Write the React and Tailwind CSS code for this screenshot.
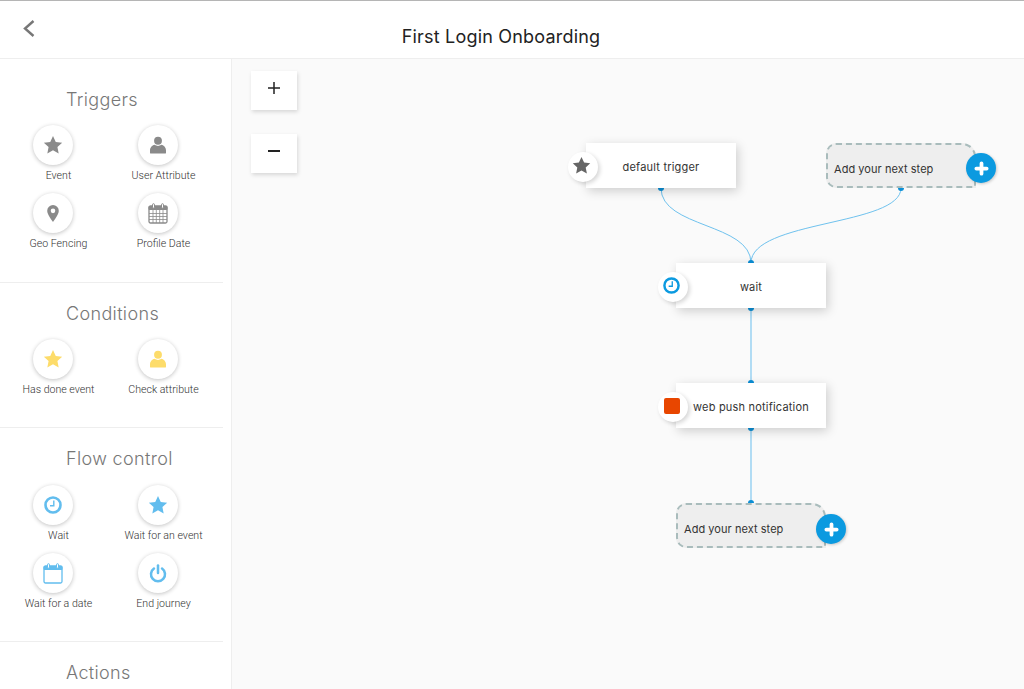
const GRAY = '#8a8a8a';
const YELLOW = '#fddc6a';
const BLUE = '#62bdee';

function Star({ color, size = 20 }) {
  return (
    <svg width={size} height={size} viewBox="0 0 24 24" fill={color}>
      <path d="M12 1.200l3.300 7.100 7.700.9-5.700 5.300 1.500 7.700L12 18.400l-6.800 3.800 1.500-7.700L1 9.200l7.700-.9z" />
    </svg>
  );
}

function User({ color }) {
  return (
    <svg width="16" height="18" viewBox="0 0 18 20" fill={color}>
      <circle cx="9" cy="5.200" r="4.400" />
      <path d="M1 19.600c-.6 0-1-.4-1-1v-2.400c0-3.400 2.600-6 5.400-6.400C6.400 10.700 7.600 11 9 11s2.600-.3 3.600-1.200c2.800.4 5.400 3 5.400 6.400v2.400c0 .6-.4 1-1 1z" />
    </svg>
  );
}

function Pin({ color }) {
  return (
    <svg width="12" height="17" viewBox="0 0 14 20">
      <path fill={color} fillRule="evenodd" d="M7 0a6.800 6.800 0 0 1 6.800 6.800C13.800 11 9.500 16.500 7 20 4.500 16.500.2 11 .2 6.800A6.800 6.800 0 0 1 7 0zm0 4.200a2.700 2.700 0 1 0 0 5.400 2.700 2.700 0 0 0 0-5.400z" />
    </svg>
  );
}

function Calendar({ color, grid }) {
  return (
    <svg width="20" height="21" viewBox="0 0 20 21" fill="none" stroke={color}>
      <rect x="1" y="3" width="18" height="17" rx="1.500" strokeWidth="1.300" />
      <path d="M1 3.500h18V6.500H1z" fill={color} />
      <rect x="4.500" y="0.700" width="2" height="4.500" rx="1" fill="#fff" strokeWidth="1" />
      <rect x="13.500" y="0.700" width="2" height="4.500" rx="1" fill="#fff" strokeWidth="1" />
      {grid && <path d="M1 10.500h18M1 13.500h18M1 16.500h18M5 7v13M8.300 7v13M11.700 7v13M15 7v13" strokeWidth="0.800" />}
    </svg>
  );
}

function Clock({ color, size = 18 }) {
  return (
    <svg width={size} height={size} viewBox="0 0 18 18" fill="none" stroke={color}>
      <circle cx="9" cy="9" r="7.500" strokeWidth="2.600" />
      <path d="M9.800 4.600v5.200H6" strokeWidth="1.400" />
    </svg>
  );
}

function Power({ color }) {
  return (
    <svg width="18" height="19" viewBox="0 0 20 21" fill="none" stroke={color} strokeWidth="2.800" strokeLinecap="round">
      <path d="M10 1.500v8.500" />
      <path d="M5.500 5a7.800 7.800 0 1 0 9 0" />
    </svg>
  );
}

const sections = [
  {
    title: 'Triggers',
    className: 'h-[224px] pt-[30px]',
    listClassName: 'mt-[14px]',
    items: [
      { label: 'Event', icon: <Star color={GRAY} /> },
      { label: 'User Attribute', icon: <User color={GRAY} /> },
      { label: 'Geo Fencing', icon: <Pin color={GRAY} /> },
      { label: 'Profile Date', icon: <Calendar color={GRAY} grid /> },
    ],
  },
  {
    title: 'Conditions',
    className: 'h-[145px] pt-[20px]',
    listClassName: 'mt-[14px]',
    items: [
      { label: 'Has done event', icon: <Star color={YELLOW} /> },
      { label: 'Check attribute', icon: <User color={YELLOW} /> },
    ],
  },
  {
    title: 'Flow control',
    className: 'h-[214px] pt-[20px]',
    listClassName: 'mt-[15px]',
    items: [
      { label: 'Wait', icon: <Clock color={BLUE} /> },
      { label: 'Wait for an event', icon: <Star color={BLUE} /> },
      { label: 'Wait for a date', icon: <Calendar color={BLUE} /> },
      { label: 'End journey', icon: <Power color={BLUE} /> },
    ],
  },
];

function Tool({ label, icon }) {
  return (
    <div className="flex flex-col items-center">
      <div className="mr-[11px] flex h-[40px] w-[40px] items-center justify-center rounded-full bg-white shadow-[0_1px_4px_rgba(0,0,0,0.24)]">
        {icon}
      </div>
      <div className="mt-[3px] h-[15px] whitespace-nowrap font-['Roboto',sans-serif] text-[10.6px] leading-[15px] font-light text-[#333]">
        {label}
      </div>
    </div>
  );
}

function Sidebar() {
  return (
    <aside className="h-full w-[232px] shrink-0 overflow-hidden border-r border-[#eee] bg-white">
      {sections.map((section) => (
        <section key={section.title} className={`w-[223px] border-b border-[#eee] ${section.className}`}>
          <h2 className="ml-[66px] font-['Inter',sans-serif] text-[18px] leading-[22px] font-light tracking-[0.35px] text-[#777]">
            {section.title}
          </h2>
          <div className={`grid grid-cols-[105px_105px] gap-y-[10px] pl-[6px] ${section.listClassName}`}>
            {section.items.map((item) => (
              <Tool key={item.label} {...item} />
            ))}
          </div>
        </section>
      ))}
      <h2 className="mt-[20px] ml-[66px] font-['Inter',sans-serif] text-[18px] leading-[22px] font-light tracking-[0.35px] text-[#777]">
        Actions
      </h2>
    </aside>
  );
}

function Node({ x, y, label, badge }) {
  return (
    <div
      className="absolute flex h-[45px] w-[150px] items-center justify-center bg-white pt-[3px] font-['Inter',sans-serif] text-[11px] tracking-[0.2px] text-[#333] shadow-[2px_3px_10px_rgba(0,0,0,0.18)]"
      style={{ left: x, top: y }}
    >
      {label}
      <div className="absolute top-[9px] left-[-18px] flex h-[30px] w-[30px] items-center justify-center rounded-full bg-white pr-[3px] pb-[3px] shadow-[2px_2px_4px_rgba(0,0,0,0.16)]">
        {badge}
      </div>
    </div>
  );
}

function AddStep({ x, y, plusTop }) {
  return (
    <div
      className="absolute flex h-[45px] w-[150px] items-center rounded-l-[10px] rounded-tr-[14px] border-2 border-dashed border-[#a9bcbc] bg-[#eeeeee] pt-[8px] pl-[6px] font-['Inter',sans-serif] text-[11px] tracking-[0.05px] text-[#333]"
      style={{ left: x, top: y }}
    >
      Add your next step
      <div
        className="absolute right-[-22px] flex h-[30px] w-[30px] items-center justify-center rounded-full bg-[#0b9ae0] shadow-[1px_1px_3px_rgba(0,0,0,0.2)]"
        style={{ top: plusTop }}
      >
        <svg width="15" height="15" viewBox="0 0 16 16" stroke="#fff" strokeWidth="4" strokeLinecap="round">
          <path d="M8 2.500v11M2.500 8h11" />
        </svg>
      </div>
    </div>
  );
}

function Canvas() {
  const dots = [
    [429, 129],
    [519, 204],
    [669, 129],
    [519, 249],
    [519, 324],
    [519, 369],
    [519, 444],
  ];

  return (
    <main className="relative h-full min-w-0 flex-1 overflow-hidden bg-[#fafafa]">
      <div className="flex flex-col gap-[24px] pt-[12px] pl-[19px]">
        <button className="flex h-[39px] w-[46px] items-center justify-center bg-white pb-[6px] shadow-[1px_2px_4px_rgba(0,0,0,0.14)]">
          <svg width="12" height="12" viewBox="0 0 12 12" stroke="#222" strokeWidth="1.500">
            <path d="M6 0v12M0 6h12" />
          </svg>
        </button>
        <button className="flex h-[39px] w-[46px] items-center justify-center bg-white pb-[6px] shadow-[1px_2px_4px_rgba(0,0,0,0.14)]">
          <svg width="12" height="12" viewBox="0 0 12 12" stroke="#222" strokeWidth="2">
            <path d="M0 6h12" />
          </svg>
        </button>
      </div>

      <svg className="absolute top-0 left-0" width="792" height="630" fill="none">
        <path d="M429 129C429 169 519 164 519 204" stroke="#6fc2ee" />
        <path d="M669 129C669 167 519 161 519 204" stroke="#6fc2ee" />
        <path d="M519 249V324M519 369V444" stroke="#8ccdf1" strokeWidth="1.300" />
        {dots.map(([cx, cy]) => (
          <circle key={`${cx}-${cy}`} cx={cx} cy={cy} r="3" fill="#0b8fd6" />
        ))}
      </svg>

      <Node x={354} y={84} label="default trigger" badge={<Star color="#666" size={19} />} />
      <Node x={444} y={204} label="wait" badge={<Clock color="#0b9ae0" size={17} />} />
      <Node
        x={444}
        y={324}
        label="web push notification"
        badge={<div className="h-[16px] w-[16px] rounded-[2px] bg-[#e84600]" />}
      />
      <AddStep x={594} y={84} plusTop={8} />
      <AddStep x={444} y={444} plusTop={9} />
    </main>
  );
}

export default function App() {
  return (
    <div className="flex h-[689px] w-[1024px] flex-col overflow-hidden bg-white">
      <header className="relative flex h-[59px] shrink-0 items-end justify-center border-t border-b border-t-[#b5b5b5] border-b-[#eee] pr-[22px] pb-[9px]">
        <svg className="absolute top-[19px] left-[22px]" width="13" height="17" viewBox="0 0 13 17" fill="none" stroke="#777" strokeWidth="2.400">
          <path d="M11.500 1L3 8.500l8.500 7.500" />
        </svg>
        <h1 className="font-['Inter',sans-serif] text-[18px] leading-[24px] tracking-[0.2px] text-[#222]">First Login Onboarding</h1>
      </header>
      <div className="flex min-h-0 flex-1">
        <Sidebar />
        <Canvas />
      </div>
    </div>
  );
}
